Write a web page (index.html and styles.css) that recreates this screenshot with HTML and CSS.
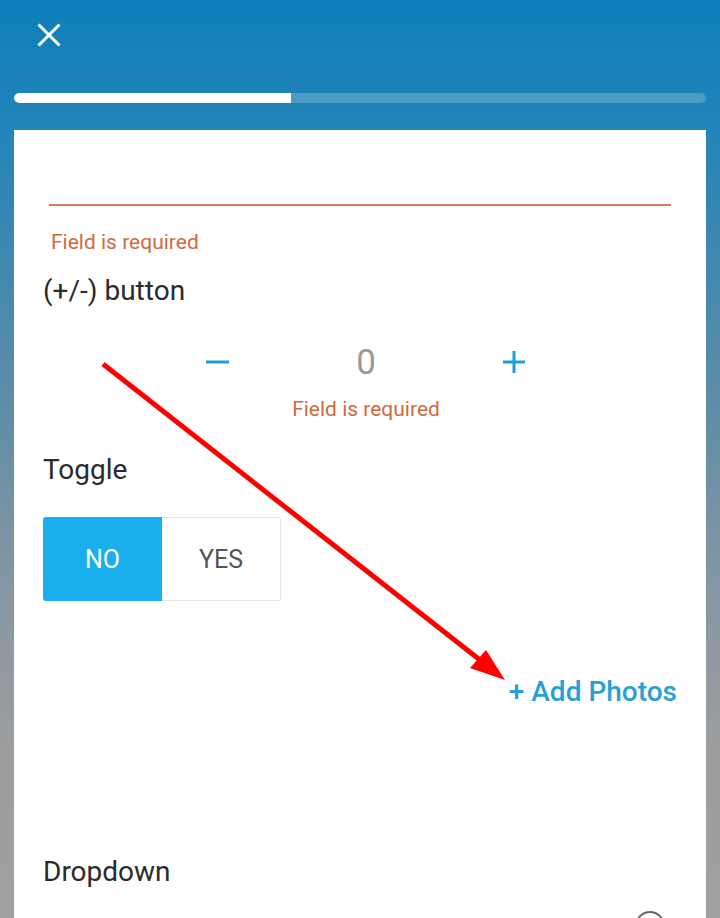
FILE: index.html
```html
<!DOCTYPE html>
<html lang="en">
<head>
  <meta charset="UTF-8" />
  <title>Form</title>
  <link rel="stylesheet" href="styles.css">
</head>
<body>

<div class="header">
  <button class="close" aria-label="Close">
    <svg width="24" height="24" viewBox="0 0 24 24">
      <path d="M1.5 1.5 L22.5 22.5 M22.5 1.5 L1.5 22.5" stroke="#fff" stroke-width="3" />
    </svg>
  </button>
  <div class="progress">
    <div class="progress-fill" style="width: 40%"></div>
  </div>
</div>

<div class="card">

  <!-- TEXT INPUT -->
  <div class="field">
    <div class="input-line"></div>
    <div class="error">Field is required</div>
  </div>

  <!-- STEPPER -->
  <div class="field">
    <div class="label">(+/-) button</div>
    <div class="stepper">
      <button class="step-btn" aria-label="Decrease">
        <svg width="24" height="24" viewBox="0 0 24 24">
          <path d="M0 12 H23" stroke="#1c9fd9" stroke-width="3" />
        </svg>
      </button>
      <span class="step-value">0</span>
      <button class="step-btn" aria-label="Increase">
        <svg width="24" height="24" viewBox="0 0 24 24">
          <path d="M1 12 H23 M12 1 V23" stroke="#1c9fd9" stroke-width="3" />
        </svg>
      </button>
    </div>
    <div class="error center">Field is required</div>
  </div>

  <!-- TOGGLE -->
  <div class="field toggle-field">
    <div class="label">Toggle</div>
    <div class="toggle">
      <button class="toggle-btn active">NO</button>
      <button class="toggle-btn">YES</button>
    </div>
  </div>

  <div class="photos">
    <a class="add-photos">+ Add Photos</a>
  </div>

  <!-- DROPDOWN -->
  <div class="field">
    <div class="label">Dropdown</div>
    <div class="dropdown">
      <span class="dropdown-icon"></span>
    </div>
  </div>

</div>

<svg class="annotation" width="720" height="918" viewBox="0 0 720 918">
  <line x1="103" y1="364" x2="480" y2="660" stroke="#ff0000" stroke-width="5" />
  <polygon points="505,680 470,668 486,650" fill="#ff0000" />
</svg>

</body>
</html>
```

FILE: styles.css
```css
body {
  margin: 0;
  font-family: Roboto, "Liberation Sans", sans-serif;
  background: linear-gradient(to bottom, #0d7fbb 0%, #2484b8 14%, #5a8ca8 40%, #8a98a2 65%, #9d9d9d 80%, #a0a0a0 100%);
  min-height: 918px;
  overflow: hidden;
}

.header {
  padding: 23px 14px 0;
}

.close {
  background: none;
  border: none;
  padding: 0;
  margin-left: 23px;
  width: 24px;
  height: 24px;
  display: block;
  cursor: pointer;
}

.progress {
  margin-top: 46px;
  height: 10px;
  border-radius: 5px;
  background: rgba(255, 255, 255, 0.2);
  overflow: hidden;
}

.progress-fill {
  height: 100%;
  background: #fff;
  border-radius: 5px 0 0 5px;
}

.card {
  background: #fff;
  margin: 27px 14px 0;
  padding: 0 29px;
  min-height: 800px;
}

.field {
  display: flex;
  flex-direction: column;
}

.input-line {
  margin: 74px 6px 0;
  height: 2px;
  background: #d97b52;
}

.error {
  color: #cf6a3f;
  font-size: 21px;
  margin: 23px 0 0 8px;
  line-height: 26px;
}

.error.center {
  text-align: center;
  margin: 14px 0 0;
  padding-left: 12px;
}

.label {
  color: #2b2b2b;
  font-size: 28px;
  line-height: 34px;
  margin-top: 19px;
}

.toggle-field .label {
  margin-top: 31px;
}

.stepper {
  display: flex;
  justify-content: center;
  align-items: center;
  gap: 124px;
  margin-top: 34px;
  padding-left: 12px;
  height: 40px;
}

.step-btn {
  background: none;
  border: none;
  padding: 0;
  width: 24px;
  height: 24px;
  display: block;
}

.step-value {
  color: #9a9a9a;
  font-size: 35px;
  width: 24px;
  text-align: center;
}

.toggle {
  display: flex;
  margin-top: 30px;
}

.toggle-btn {
  width: 119px;
  height: 84px;
  font-family: Roboto, "Liberation Sans", sans-serif;
  font-size: 25px;
  color: #555;
  background: #fff;
  border: 1px solid #e6e6e6;
  border-left: none;
  border-radius: 0 3px 3px 0;
}

.toggle-btn.active {
  background: #19aeec;
  color: #fff;
  border: none;
  border-radius: 3px 0 0 3px;
}

.photos {
  display: flex;
  justify-content: flex-end;
  margin-top: 74px;
}

.add-photos {
  color: #2a9fd3;
  font-size: 28px;
  font-weight: 500;
  line-height: 34px;
}

.photos + .field .label {
  margin-top: 146px;
}

.dropdown {
  display: flex;
  justify-content: flex-end;
  margin-top: 22px;
  padding-right: 12px;
}

.dropdown-icon {
  width: 26px;
  height: 26px;
  border: 2px solid #666;
  border-radius: 50%;
}

.annotation {
  position: absolute;
  top: 0;
  left: 0;
  pointer-events: none;
}
```
